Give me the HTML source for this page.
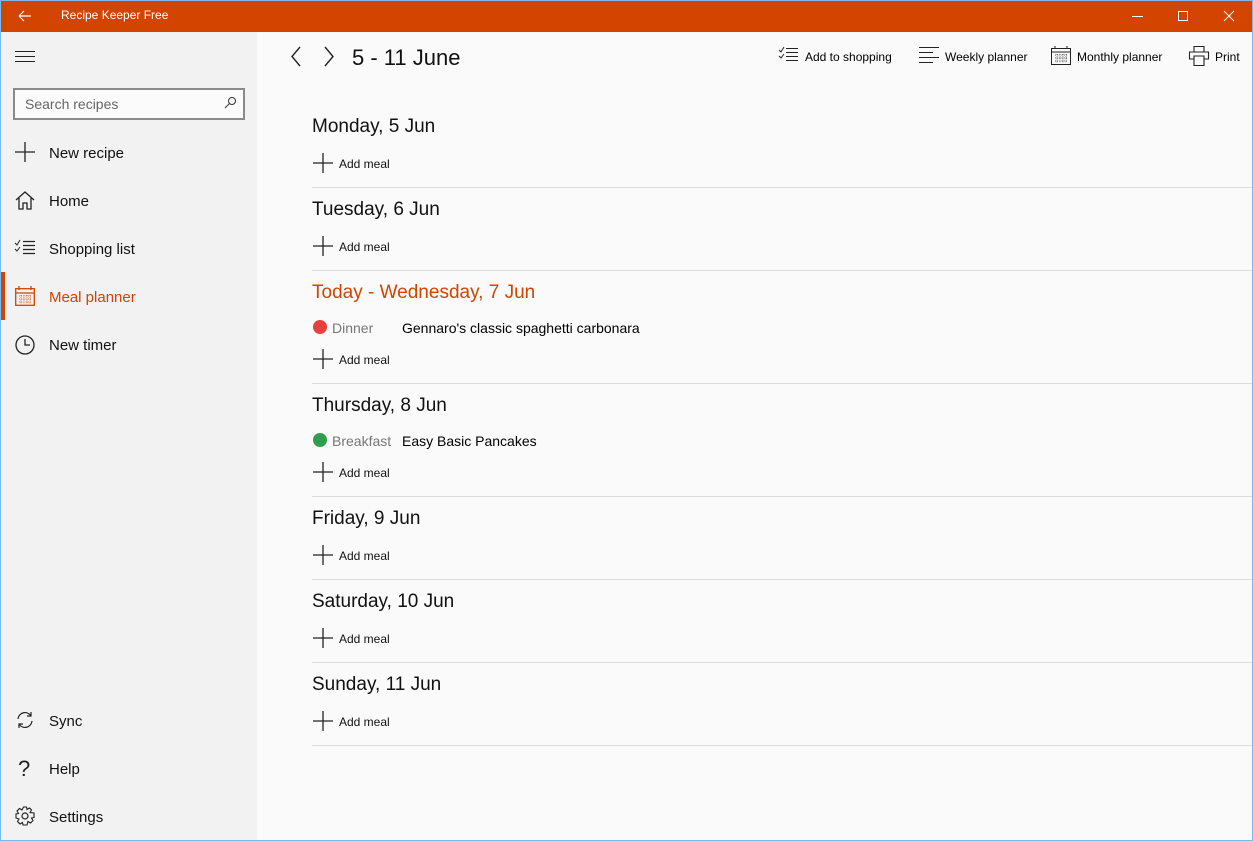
<!DOCTYPE html>
<html><head><style>
*{margin:0;padding:0;box-sizing:border-box}
body{width:1253px;height:841px;overflow:hidden;font-family:"Segoe UI","Liberation Sans",sans-serif;background:#fafafa;position:relative;color:#000}
.a{position:absolute;white-space:nowrap}
#win{position:absolute;left:0;top:0;width:1253px;height:841px;border:1px solid #7cb9ee;border-top:none;pointer-events:none}
#tb{position:absolute;left:0;top:0;width:1253px;height:32px;background:#d24400;border-top:1px solid #7cb9ee}
#sb{position:absolute;left:1px;top:32px;width:256px;height:808px;background:#f2f2f2}
.nav{font-size:15px;color:#111}
.h{font-size:19px;color:#111}
.am{font-size:12px;color:#111}
.line{position:absolute;left:312px;width:940px;height:1px;background:#dcdcdc}
svg{position:absolute;overflow:visible}
</style></head><body>
<div id="tb"></div>
<svg style="left:18px;top:9px" width="14" height="14"><path d="M1 7H13M1 7L6 2M1 7L6 12" stroke="#fff" stroke-width="1.2" fill="none"/></svg>
<div class="a" style="left:61px;top:8px;font-size:12px;color:#fff">Recipe Keeper Free</div>
<svg style="left:1132px;top:16px" width="12" height="2"><path d="M0 .5H11" stroke="#fff"/></svg>
<svg style="left:1178px;top:11px" width="10" height="10"><rect x=".5" y=".5" width="9" height="9" stroke="#fff" fill="none"/></svg>
<svg style="left:1224px;top:11px" width="10" height="10"><path d="M0 0L10 10M10 0L0 10" stroke="#fff"/></svg>

<div id="sb"></div>
<svg style="left:15px;top:51px" width="20" height="12"><path d="M0 .5H20M0 5.5H20M0 10.5H20" stroke="#222"/></svg>
<div class="a" style="left:13px;top:88px;width:232px;height:32px;border:2px solid #8a8a8a;background:#fbfbfb"></div>
<div class="a" style="left:25px;top:96px;font-size:14px;color:#666">Search recipes</div>
<svg style="left:224px;top:97px" width="12" height="12"><circle cx="8" cy="4" r="3.5" stroke="#333" fill="none"/><path d="M5.5 6.5L1 11" stroke="#333"/></svg>

<svg style="left:15px;top:142px" width="20" height="20"><path d="M10 0V20M0 10H20" stroke="#222" stroke-width="1.3"/></svg>
<div class="a nav" style="left:49px;top:145px">New recipe</div>
<svg style="left:15px;top:191px" width="20" height="19"><path d="M1 9L10 1L19 9M4 7V18H8V12H12V18H16V7" stroke="#222" stroke-width="1.3" fill="none"/></svg>
<div class="a nav" style="left:49px;top:193px">Home</div>
<svg style="left:15px;top:240px" width="20" height="16"><path d="M0 3L2 5L5 0M0 9L2 11L5 7" stroke="#222" fill="none"/><path d="M8 1.5H20M8 5.5H20M8 9.5H20M8 13.5H20" stroke="#222" stroke-width="1.2"/></svg>
<div class="a nav" style="left:49px;top:241px">Shopping list</div>
<div class="a" style="left:1px;top:272px;width:4px;height:48px;background:#d24400"></div>
<svg style="left:15px;top:286px" width="20" height="20"><rect x=".7" y="2.7" width="18.6" height="16.6" stroke="#d24400" stroke-width="1.3" fill="none"/><path d="M1 7H19M4 0V4M16 0V4" stroke="#d24400" stroke-width="1.3"/><path d="M4 10H16M4 13H16M4 16H16M6 9V18M9 9V18M12 9V18M15 9V18" stroke="#d24400" stroke-width=".8" stroke-dasharray="1 1.2"/></svg>
<div class="a nav" style="left:49px;top:289px;color:#d24400">Meal planner</div>
<svg style="left:15px;top:335px" width="20" height="20"><circle cx="10" cy="10" r="9" stroke="#222" stroke-width="1.3" fill="none"/><path d="M10 4V10H15" stroke="#222" stroke-width="1.3" fill="none"/></svg>
<div class="a nav" style="left:49px;top:337px">New timer</div>

<svg style="left:16px;top:711px" width="18" height="18"><path d="M2 8A7 7 0 0 1 15 5M16 10A7 7 0 0 1 3 13M15 1V5H11M3 17V13H7" stroke="#222" stroke-width="1.2" fill="none"/></svg>
<div class="a nav" style="left:49px;top:713px">Sync</div>
<div class="a" style="left:18px;top:756px;font-size:22px;color:#222;font-weight:300">?</div>
<div class="a nav" style="left:49px;top:761px">Help</div>
<svg style="left:15px;top:806px" width="20" height="20"><circle cx="10" cy="10" r="3" stroke="#222" stroke-width="1.2" fill="none"/><path d="M8.5 1H11.5L12 3.5L14.5 2L16.5 4L15 6.5L19 7V11.5L16.5 12L18 14.5L15.5 17L13 15.5L12 19H8L7.5 16.5L5 18L2.5 15.5L4 13L1 12V8L3.5 7.5L2 5L4.5 2.5L7 4Z" stroke="#222" stroke-width="1.1" fill="none"/></svg>
<div class="a nav" style="left:49px;top:809px">Settings</div>

<svg style="left:291px;top:47px" width="10" height="20"><path d="M9 0L1 9.5L9 19" stroke="#222" stroke-width="1.4" fill="none"/></svg>
<svg style="left:324px;top:47px" width="10" height="20"><path d="M1 0L9 9.5L1 19" stroke="#222" stroke-width="1.4" fill="none"/></svg>
<div class="a" style="left:352px;top:45px;font-size:22px;color:#111">5 - 11 June</div>

<svg style="left:779px;top:47px" width="20" height="16"><path d="M0 3L2 5L5 0M0 9L2 11L5 7" stroke="#222" fill="none"/><path d="M7 1.5H19M7 5.5H19M7 9.5H19M7 13.5H19" stroke="#222" stroke-width="1.1"/></svg>
<div class="a" style="left:805px;top:50px;font-size:12px">Add to shopping</div>
<svg style="left:919px;top:47px" width="20" height="17"><path d="M0 .5H20M0 5.5H14M0 10.5H20M0 15.5H14" stroke="#222" stroke-width="1.1"/></svg>
<div class="a" style="left:945px;top:50px;font-size:12px">Weekly planner</div>
<svg style="left:1051px;top:46px" width="20" height="20"><rect x=".5" y="2.5" width="19" height="16" stroke="#222" fill="none"/><path d="M1 6H19M4 0V3M16 0V3" stroke="#222"/><path d="M4 9H16M4 12H16M4 15H16M6 8V17M9 8V17M12 8V17M15 8V17" stroke="#222" stroke-width=".7" stroke-dasharray="1 1.2"/></svg>
<div class="a" style="left:1077px;top:50px;font-size:12px">Monthly planner</div>
<svg style="left:1189px;top:46px" width="20" height="20"><path d="M5 6V.5H15V6M5 13H.5V6H19.5V13H15M5 10H15V19.5H5Z" stroke="#222" stroke-width="1.1" fill="none"/></svg>
<div class="a" style="left:1215px;top:50px;font-size:12px">Print</div>

<div class="a h" style="left:312px;top:116px">Monday, 5 Jun</div>
<svg style="left:313px;top:153px" width="20" height="20"><path d="M10 0V20M0 10H20" stroke="#222" stroke-width="1.3"/></svg>
<div class="a am" style="left:339px;top:157px">Add meal</div>
<div class="line" style="top:187px"></div>

<div class="a h" style="left:312px;top:199px">Tuesday, 6 Jun</div>
<svg style="left:313px;top:236px" width="20" height="20"><path d="M10 0V20M0 10H20" stroke="#222" stroke-width="1.3"/></svg>
<div class="a am" style="left:339px;top:240px">Add meal</div>
<div class="line" style="top:270px"></div>

<div class="a h" style="left:312px;top:282px;color:#d24400">Today - Wednesday, 7 Jun</div>
<div class="a" style="left:313px;top:320px;width:14px;height:14px;border-radius:50%;background:#e8403a"></div>
<div class="a" style="left:332px;top:320px;font-size:14px;color:#777">Dinner</div>
<div class="a" style="left:402px;top:320px;font-size:14px">Gennaro's classic spaghetti carbonara</div>
<svg style="left:313px;top:349px" width="20" height="20"><path d="M10 0V20M0 10H20" stroke="#222" stroke-width="1.3"/></svg>
<div class="a am" style="left:339px;top:353px">Add meal</div>
<div class="line" style="top:383px"></div>

<div class="a h" style="left:312px;top:395px">Thursday, 8 Jun</div>
<div class="a" style="left:313px;top:433px;width:14px;height:14px;border-radius:50%;background:#2e9e4c"></div>
<div class="a" style="left:332px;top:433px;font-size:14px;color:#777">Breakfast</div>
<div class="a" style="left:402px;top:433px;font-size:14px">Easy Basic Pancakes</div>
<svg style="left:313px;top:462px" width="20" height="20"><path d="M10 0V20M0 10H20" stroke="#222" stroke-width="1.3"/></svg>
<div class="a am" style="left:339px;top:466px">Add meal</div>
<div class="line" style="top:496px"></div>

<div class="a h" style="left:312px;top:508px">Friday, 9 Jun</div>
<svg style="left:313px;top:545px" width="20" height="20"><path d="M10 0V20M0 10H20" stroke="#222" stroke-width="1.3"/></svg>
<div class="a am" style="left:339px;top:549px">Add meal</div>
<div class="line" style="top:579px"></div>

<div class="a h" style="left:312px;top:591px">Saturday, 10 Jun</div>
<svg style="left:313px;top:628px" width="20" height="20"><path d="M10 0V20M0 10H20" stroke="#222" stroke-width="1.3"/></svg>
<div class="a am" style="left:339px;top:632px">Add meal</div>
<div class="line" style="top:662px"></div>

<div class="a h" style="left:312px;top:674px">Sunday, 11 Jun</div>
<svg style="left:313px;top:711px" width="20" height="20"><path d="M10 0V20M0 10H20" stroke="#222" stroke-width="1.3"/></svg>
<div class="a am" style="left:339px;top:715px">Add meal</div>
<div class="line" style="top:745px"></div>

<div id="win"></div>
</body></html>
